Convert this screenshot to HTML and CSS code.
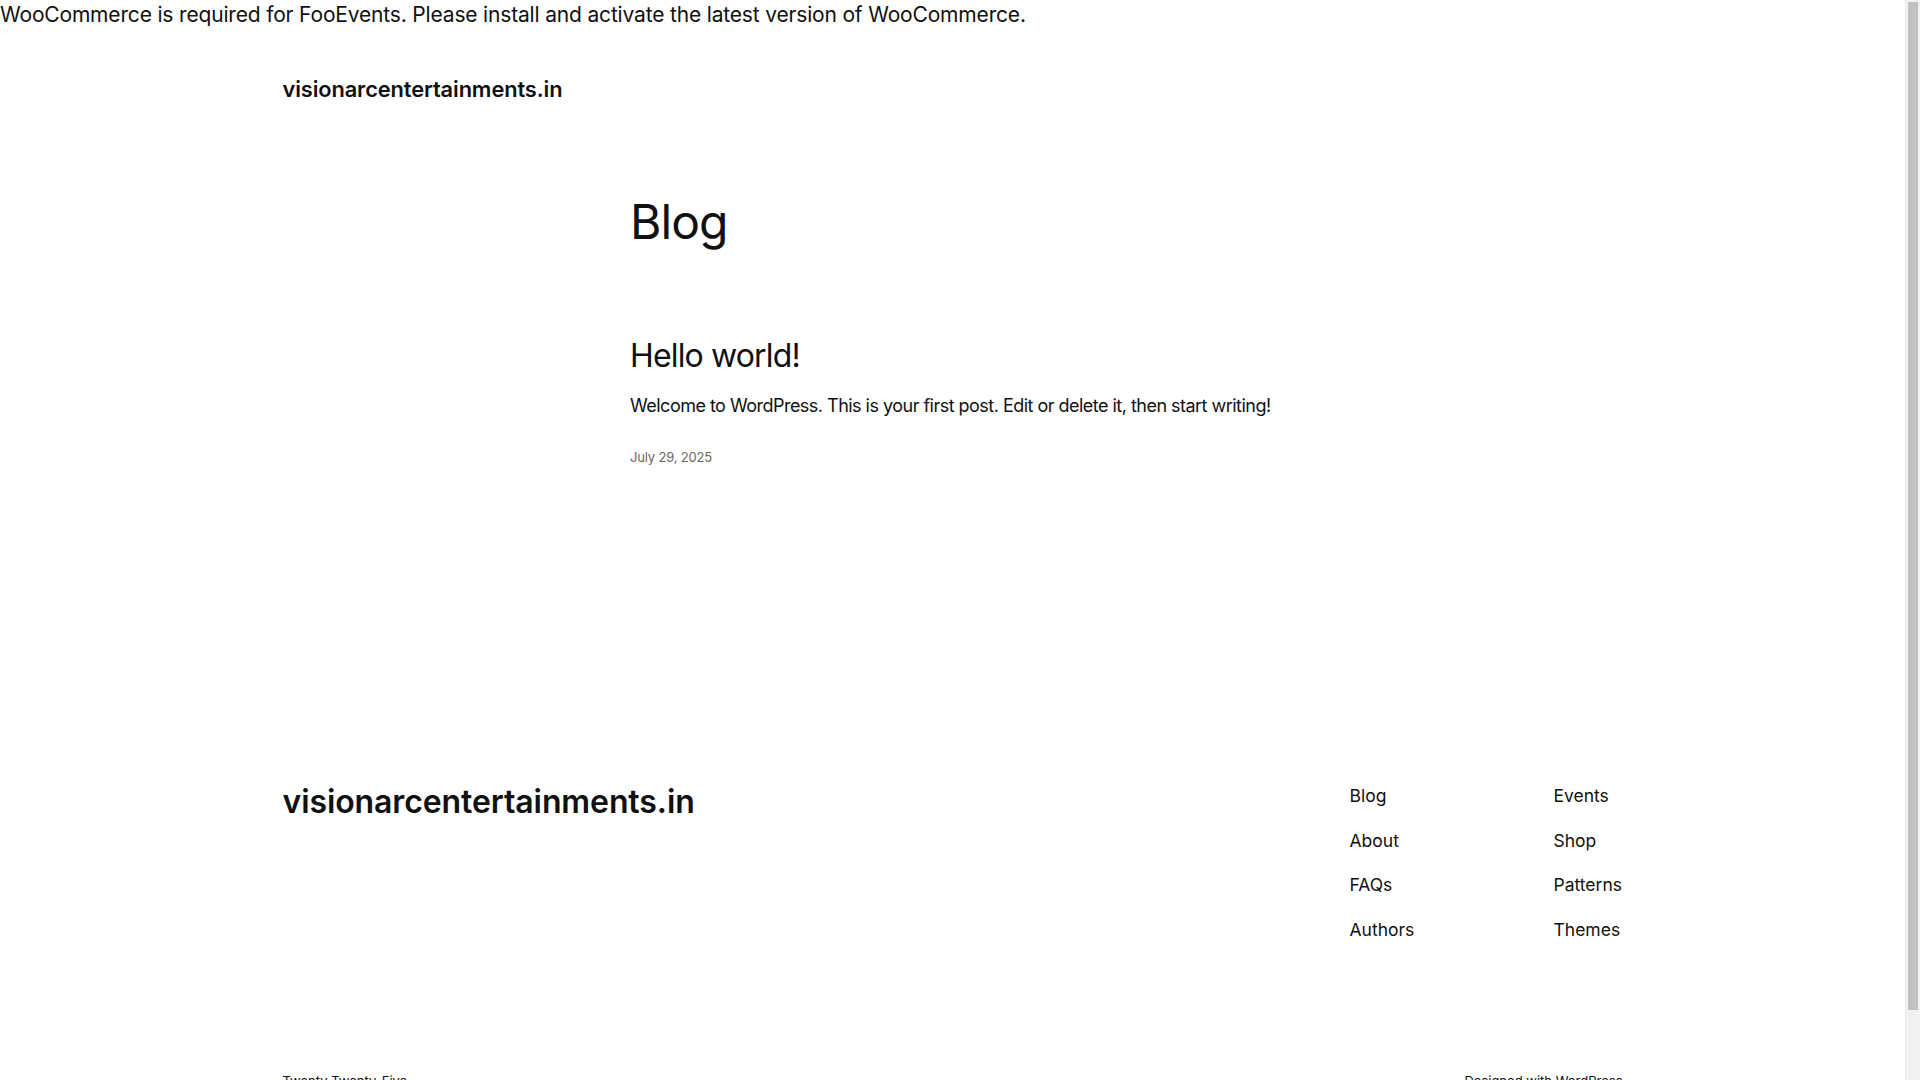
FILE: index.html
```html
<!DOCTYPE html>
<html lang="en">
<head>
<meta charset="utf-8">
<title>Blog – visionarcentertainments.in</title>
<link rel="stylesheet" href="styles.css">
</head>
<body>
<div class="page">
  <div class="notice">WooCommerce is required for FooEvents. Please install and activate the latest version of WooCommerce.</div>
  <header class="site-header">
    <div class="wide">
      <a class="site-title" href="#">visionarcentertainments.in</a>
    </div>
  </header>
  <main class="main">
    <div class="content">
      <h1 class="page-title">Blog</h1>
      <article class="post">
        <h2 class="post-title"><a href="#">Hello world!</a></h2>
        <p class="excerpt">Welcome to WordPress. This is your first post. Edit or delete it, then start writing!</p>
        <div class="post-date">July 29, 2025</div>
      </article>
    </div>
  </main>
  <footer class="site-footer">
    <div class="wide footer-top">
      <a class="footer-title" href="#">visionarcentertainments.in</a>
      <nav class="footer-nav">
        <ul class="nav-col nav-col-1">
          <li><a href="#">Blog</a></li>
          <li><a href="#">About</a></li>
          <li><a href="#">FAQs</a></li>
          <li><a href="#">Authors</a></li>
        </ul>
        <ul class="nav-col nav-col-2">
          <li><a href="#">Events</a></li>
          <li><a href="#">Shop</a></li>
          <li><a href="#">Patterns</a></li>
          <li><a href="#">Themes</a></li>
        </ul>
      </nav>
    </div>
    <div class="wide footer-bottom">
      <span>Twenty Twenty-Five</span>
      <span>Designed with <a href="#">WordPress</a></span>
    </div>
  </footer>
</div>
<div class="fake-scrollbar" aria-hidden="true">
  <div class="sb-thumb"></div>
</div>
</body>
</html>
```

FILE: styles.css
```css
body {
  margin: 0;
  background: #ffffff;
  color: #111111;
  font-family: Inter, "Noto Sans", sans-serif;
  font-size: 18px;
}

.page {
  margin-right: 15px;
}

a {
  color: inherit;
  text-decoration: none;
}

.notice {
  font-size: 21px;
  line-height: 30px;
  height: 30px;
  white-space: nowrap;
  letter-spacing: -0.17px;
}

.wide {
  width: 1340px;
  margin: 0 auto;
}

.site-header {
  padding-top: 45px;
}

.site-title {
  display: block;
  font-size: 21.8px;
  font-weight: 600;
  line-height: 28px;
  letter-spacing: -0.1px;
}

.content {
  width: 645px;
  margin: 0 auto;
  padding-top: 92px;
}

.page-title {
  margin: 0;
  font-size: 48px;
  font-weight: 400;
  line-height: 54px;
  letter-spacing: -0.9px;
}

.post {
  padding-top: 88px;
}

.post-title {
  margin: 0;
  font-size: 32px;
  font-weight: 400;
  line-height: 38px;
  letter-spacing: -0.85px;
}

.excerpt {
  margin: 18px 0 0;
  font-size: 18px;
  line-height: 25px;
  letter-spacing: -0.52px;
  white-space: nowrap;
}

.post-date {
  margin-top: 29px;
  font-size: 13px;
  line-height: 20px;
  letter-spacing: -0.17px;
  color: #686868;
}

.site-footer {
  padding-top: 317px;
  padding-bottom: 48px;
}

.footer-top {
  display: flex;
  justify-content: space-between;
  align-items: flex-start;
}

.footer-title {
  font-size: 32px;
  font-weight: 600;
  line-height: 36px;
  letter-spacing: -0.1px;
}

.footer-nav {
  display: flex;
}

.nav-col {
  list-style: none;
  margin: 0;
  padding: 0;
  display: flex;
  flex-direction: column;
  gap: 20.5px;
  font-size: 17.5px;
  line-height: 24px;
}

.nav-col-1 {
  width: 204px;
}

.nav-col-2 {
  width: 69px;
}

.footer-bottom {
  display: flex;
  justify-content: space-between;
  margin-top: 129px;
  font-size: 13px;
  line-height: 20px;
}

.fake-scrollbar {
  position: fixed;
  top: 0;
  right: 0;
  width: 15px;
  height: 100vh;
  background: #f1f1f1;
  border-left: 1px solid #e8e8e8;
  box-sizing: border-box;
}

.sb-thumb {
  position: absolute;
  top: 2px;
  left: 2px;
  right: 2px;
  height: 1008px;
  background: #c1c1c1;
  border-radius: 0;
}
```
